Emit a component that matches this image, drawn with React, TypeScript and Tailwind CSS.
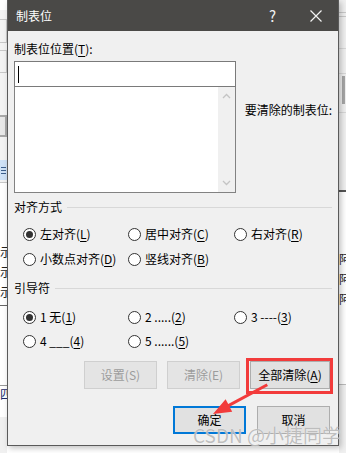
import React from "react";

const FONT = "font-['Microsoft_YaHei','Noto_Sans_CJK_SC','Noto_Sans',sans-serif]";

function U({ c }: { c: string }) {
  return <span className="underline underline-offset-[2px] decoration-[1px]">{c}</span>;
}

function Radio({ checked, children }: { checked?: boolean; children: React.ReactNode }) {
  return (
    <div className="flex items-center gap-[4px] h-[16px] leading-[16px]">
      <span className="w-[13px] h-[13px] rounded-full border border-[#333333] bg-white flex items-center justify-center shrink-0">
        {checked && <span className="w-[7px] h-[7px] rounded-full bg-[#333333]" />}
      </span>
      <span className="whitespace-nowrap">{children}</span>
    </div>
  );
}

function Btn({
  children,
  disabled,
  primary,
  w,
}: {
  children: React.ReactNode;
  disabled?: boolean;
  primary?: boolean;
  w: string;
}) {
  const base = "h-[28px] flex items-center justify-center text-[12px] leading-none ";
  const style = disabled
    ? "bg-[#e4e4e4] border border-[#cfcfcf] text-[#9c9c9c]"
    : primary
    ? "bg-[#e1e1e1] border-2 border-[#0078d7] text-black"
    : "bg-[#e1e1e1] border border-[#adadad] text-black";
  return <div className={base + style + " " + w}>{children}</div>;
}

export default function App() {
  return (
    <div className={"relative w-[346px] h-[453px] overflow-hidden bg-white " + FONT}>
      {/* background document fragments */}
      <div className="absolute inset-0 flex justify-between">
        <div className="w-[7px] flex flex-col">
          <div className="h-[10px] bg-white" />
          <div className="h-[85px] bg-[#f3f3f3] flex flex-col">
            <div className="h-[9px]" />
            <div className="h-[24px] border-y border-r border-[#c8c8c8]" />
            <div className="h-[7px]" />
            <div className="h-[23px] border-y border-r border-[#c8c8c8]" />
          </div>
          <div className="h-[20px] bg-[#f3f3f3]" />
          <div className="h-[22px] bg-[#e8e8e8] border-y-2 border-r-2 border-[#a8a8a8]" />
          <div className="h-[23px] bg-[#f3f3f3]" />
          <div className="h-[20px] bg-[#cfe2f7] flex flex-col justify-center gap-[2px] pl-[1px]">
            <div className="h-px w-[5px] bg-[#3b5e8c]" />
            <div className="h-px w-[5px] bg-[#3b5e8c]" />
            <div className="h-px w-[5px] bg-[#3b5e8c]" />
          </div>
          <div className="h-[3px] bg-[#f3f3f3] border-b border-[#c8c8c8]" />
          <div className="h-[62px] bg-white" />
          <div className="h-[60px] bg-white flex flex-col gap-[6px] text-[12px] leading-[14px] text-[#222] overflow-hidden">
            <span>示</span>
            <span>示</span>
            <span>示</span>
          </div>
          <div className="h-[80px] bg-white border-t border-[#666]" />
          <div className="h-[32px] bg-white border-t border-[#999] text-[12px] leading-[16px] text-[#1a2a6a] overflow-hidden">
            <span>四</span>
          </div>
          <div className="flex-1 bg-[#f0f0f0]" />
        </div>
        <div className="w-[7px] flex flex-col">
          <div className="h-[190px] bg-[#f0f0f0] flex flex-col">
            <div className="h-[13px] border-b border-[#c9c9c9]" />
            <div className="h-[4px] border-b border-[#c9c9c9]" />
            <div className="h-[32px] border-b border-[#d8d8d8]" />
            <div className="h-[25px] border-b border-[#d8d8d8]" />
            <div className="h-[38px] flex pl-[3px]">
              <div className="w-[3px] h-[28px] bg-[#a6a6a6] mt-[2px]" />
            </div>
            <div className="flex-1 border-t border-[#d8d8d8]" />
          </div>
          <div className="h-[2px] bg-[#555]" />
          <div className="h-[60px] bg-white" />
          <div className="h-[60px] bg-white flex flex-col gap-[6px] text-[12px] leading-[14px] text-[#222] overflow-hidden">
            <span>阿</span>
            <span>阿</span>
            <span>阿</span>
          </div>
          <div className="h-[73px] bg-white border-b border-[#bbb]" />
          <div className="flex-1 bg-[#f0f0f0]" />
        </div>
      </div>

      {/* dialog window */}
      <div className="absolute left-[7px] top-0 w-[332px] h-[446px] bg-[#f0f0f0] border-x border-b border-[#5a5a5a] flex flex-col shadow-[2px_2px_6px_rgba(0,0,0,0.25)]">
        {/* title bar */}
        <div className="h-[31px] bg-[#4a4947] flex items-center pl-[8px] pr-[10px] text-white shrink-0">
          <span className="text-[12px] leading-none">制表位</span>
          <span className="ml-auto mr-[34px] text-[15px] leading-none text-[#f2f2f2]">?</span>
          <svg width="12" height="12" viewBox="0 0 12 12" className="mr-[6px]">
            <path d="M0.5 0.5 L11.5 11.5 M11.5 0.5 L0.5 11.5" stroke="#f2f2f2" strokeWidth="1.2" />
          </svg>
        </div>

        {/* body */}
        <div className="flex-1 flex flex-col pl-[6px] pr-[6px] text-[12px] text-black">
          <div className="mt-[10px] h-[16px] leading-[16px]">
            制表位位置(<U c="T" />):
          </div>
          <div className="mt-[4px] flex">
            <div className="w-[222px] flex flex-col">
              <div className="h-[26px] bg-white border border-[#7a7a7a] flex items-center pl-[3px]">
                <div className="w-px h-[17px] bg-black" />
              </div>
              <div className="h-[106px] bg-white border border-[#828282] border-t-0 flex">
                <div className="flex-1" />
                <div className="w-[17px] bg-[#f0f0f0] flex flex-col items-center justify-between py-[6px]">
                  <svg width="9" height="6" viewBox="0 0 9 6">
                    <path d="M1 5 L4.5 1.5 L8 5" stroke="#c4c4c4" strokeWidth="1.3" fill="none" />
                  </svg>
                  <svg width="9" height="6" viewBox="0 0 9 6">
                    <path d="M1 1 L4.5 4.5 L8 1" stroke="#c4c4c4" strokeWidth="1.3" fill="none" />
                  </svg>
                </div>
              </div>
            </div>
            <div className="ml-[9px] mt-[41px] h-[16px] leading-[16px] whitespace-nowrap">要清除的制表位:</div>
          </div>

          <div className="mt-[6px] h-[16px] flex items-center">
            <span className="leading-[16px]">对齐方式</span>
            <div className="flex-1 h-px bg-[#d8d8d8] ml-[5px] mt-[1px]" />
          </div>
          <div className="mt-[11px] grid grid-cols-[105px_106px_1fr] pl-[9px]">
            <Radio checked>
              左对齐(<U c="L" />)
            </Radio>
            <Radio>
              居中对齐(<U c="C" />)
            </Radio>
            <Radio>
              右对齐(<U c="R" />)
            </Radio>
          </div>
          <div className="mt-[9px] grid grid-cols-[105px_106px_1fr] pl-[9px]">
            <Radio>
              小数点对齐(<U c="D" />)
            </Radio>
            <Radio>
              竖线对齐(<U c="B" />)
            </Radio>
          </div>

          <div className="mt-[13px] h-[16px] flex items-center">
            <span className="leading-[16px]">引导符</span>
            <div className="flex-1 h-px bg-[#d8d8d8] ml-[5px] mt-[1px]" />
          </div>
          <div className="mt-[13px] grid grid-cols-[105px_106px_1fr] pl-[9px]">
            <Radio checked>
              1 无(<U c="1" />)
            </Radio>
            <Radio>
              2 .....(<U c="2" />)
            </Radio>
            <Radio>
              3 ----(<U c="3" />)
            </Radio>
          </div>
          <div className="mt-[8px] grid grid-cols-[105px_106px_1fr] pl-[9px]">
            <Radio>
              4 ___(<U c="4" />)
            </Radio>
            <Radio>
              5 ......(<U c="5" />)
            </Radio>
          </div>

          <div className="mt-[12px] flex justify-end gap-[10px] pr-[2px]">
            <Btn disabled w="w-[73px]">
              设置(S)
            </Btn>
            <Btn disabled w="w-[73px]">
              清除(E)
            </Btn>
            <Btn w="w-[80px]">
              全部清除(<U c="A" />)
            </Btn>
          </div>
          <div className="mt-[17px] flex justify-end gap-[11px] pr-[2px]">
            <Btn primary w="w-[73px]">
              确定
            </Btn>
            <Btn w="w-[73px]">取消</Btn>
          </div>
        </div>
      </div>

      {/* annotation: red box */}
      <div className="absolute left-[246px] top-[358px] w-[87px] h-[36px] border-[3px] border-[#f23b3b]" />

      {/* annotation: red arrow */}
      <svg className="absolute left-0 top-0" width="346" height="453" viewBox="0 0 346 453">
        <polygon
          points="213,414 232.2,411.7 229.6,406.7 268,386 266.6,383.4 228.2,404.1 225.6,399.3"
          fill="#f23b3b"
        />
      </svg>

      {/* watermark */}
      <div className="absolute left-[193px] top-[423px] text-[19px] leading-[24px] whitespace-nowrap text-[rgba(170,170,170,0.75)] [text-shadow:0_0_1px_rgba(255,255,255,0.9)] font-['Noto_Sans_CJK_SC',sans-serif]">
        CSDN @小捷同学
      </div>
    </div>
  );
}
